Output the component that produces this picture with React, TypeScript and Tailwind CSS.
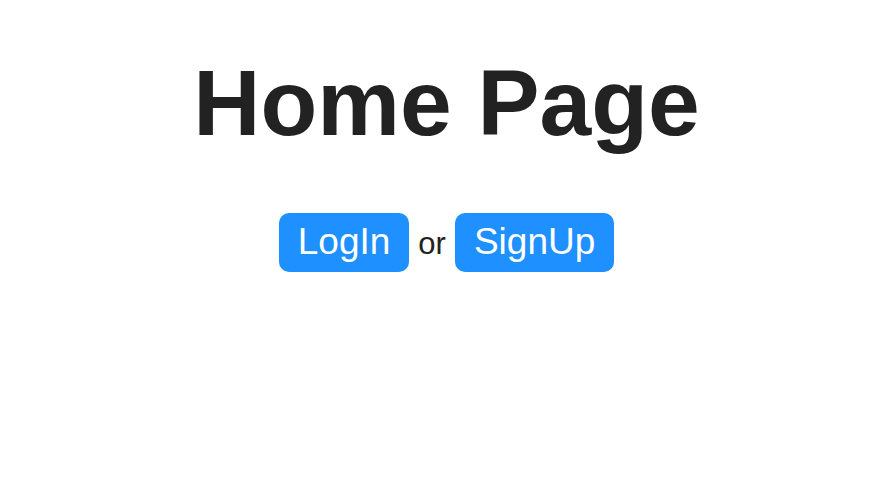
export default function App() {
  return (
    <div className="flex min-h-screen flex-col items-center bg-white font-['Liberation_Sans',Arial,sans-serif] text-[#222222]">
      <h1 className="mt-[57px] text-[93px] font-bold leading-none">Home Page</h1>
      <div className="mt-[63px] flex items-baseline gap-[9px]">
        <button className="rounded-[10px] bg-[#1e90ff] px-[19px] py-2 text-[37px] leading-[1.15] text-white">LogIn</button>
        <span className="text-[31px]">or</span>
        <button className="rounded-[10px] bg-[#1e90ff] px-[19px] py-2 text-[37px] leading-[1.15] text-white">SignUp</button>
      </div>
    </div>
  );
}
